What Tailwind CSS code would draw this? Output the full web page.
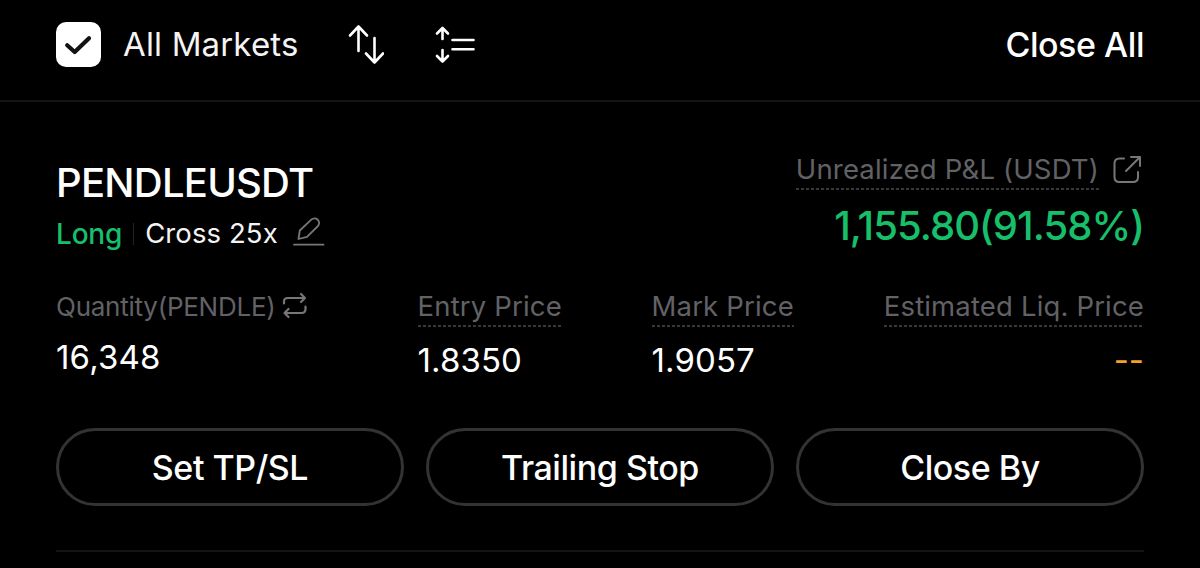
<!DOCTYPE html>
<html lang="en">

<head>
    <meta charset="UTF-8" />
    <meta name="viewport" content="width=device-width, initial-scale=1.0" />
    <title>Positions</title>
    <script src="https://cdn.jsdelivr.net/npm/@tailwindcss/browser@4"></script>
</head>

<body class="h-[568px] overflow-hidden bg-black font-['Inter',sans-serif] text-white">
    <header class="flex h-[102px] items-start justify-between border-b-2 border-[#141417] px-14 pt-[22px]">
        <div class="flex h-[45px] items-center">
            <svg class="size-[45px]" viewBox="0 0 45 45" fill="none">
                <rect width="45" height="45" rx="10" fill="#fff" />
                <path d="M11.2 23.2 18.7 30 33 16.2" stroke="#121214" stroke-width="4.2" stroke-linecap="round" stroke-linejoin="round" />
            </svg>
            <span class="ml-[22px] w-[175px] text-[33px] leading-[45px] tracking-[0.15px] whitespace-nowrap text-[#f4f4f4]">All Markets</span>
            <svg class="ml-[50px] h-[45px] w-[36px]" viewBox="348 22 36 45" fill="none" stroke="#fff" stroke-width="2.6" stroke-linecap="round" stroke-linejoin="round">
                <path d="M358.5 51V26.5M350 35.5 358.5 26.5 367 35.5" />
                <path d="M374.5 38V62.5M366 53.5 374.5 62.5 383 53.5" />
            </svg>
            <svg class="ml-[50px] h-[45px] w-[42px]" viewBox="434 22 42 45" fill="none" stroke="#fff" stroke-width="2.6" stroke-linecap="round" stroke-linejoin="round">
                <path d="M442.5 39V28M437 33.5 442.5 28 448 33.5" />
                <path d="M442.5 50V61.5M437 56 442.5 61.5 448 56" />
                <path d="M452.5 40H473.5M452.5 49.3H473.5" />
            </svg>
        </div>
        <button class="text-[34px] leading-[46px] font-medium tracking-[-0.45px]">Close All</button>
    </header>

    <main class="px-14">
        <section class="h-[450px] border-b-2 border-[#141417] pt-[50px]">
            <div class="flex h-[109px] justify-between">
                <div>
                    <h1 class="mt-[6px] text-[40px] leading-[50px] font-medium tracking-[-0.75px]">PENDLEUSDT</h1>
                    <div class="mt-[8px] flex h-[36px] items-center text-[28px]">
                        <span class="font-medium tracking-[-0.2px] text-[#17bf6b]">Long</span>
                        <span class="mx-[11px] h-[22px] w-px bg-[#222224]"></span>
                        <span class="w-[132px] text-[27.5px] tracking-[0.1px] whitespace-nowrap text-[#f4f4f4]">Cross 25x</span>
                        <svg class="ml-[16px] h-[36px] w-[32px]" viewBox="294 216 32 36" fill="none" stroke="#77777b" stroke-width="1.8" stroke-linecap="round" stroke-linejoin="round">
                            <path d="M299.5 239 300.8 230.5 312 219.8Q315.5 217 318.5 219.5 321.5 222.5 319 226L308 236.8Z" />
                            <path d="M295 244.7H324.5" />
                        </svg>
                    </div>
                </div>
                <div class="flex flex-col items-end">
                    <div class="flex items-start">
                        <div>
                            <div class="text-[27.5px] leading-[34px] tracking-[0.17px] text-[#626266]">Unrealized P&amp;L (USDT)</div>
                            <div class="mt-[2px] h-[2px] bg-[repeating-linear-gradient(90deg,#38383b_0_3px,transparent_3px_5px)]"></div>
                        </div>
                        <svg class="ml-[14px] h-[34px] w-[31px]" viewBox="1113 152.5 31 34" fill="none" stroke="#77777b" stroke-width="2" stroke-linecap="round" stroke-linejoin="round">
                            <path d="M1124 159H1119.5Q1114.5 159 1114.5 164V177.5Q1114.5 182.5 1119.5 182.5H1133Q1138 182.5 1138 177.5V172.5" />
                            <path d="M1126 171.5 1140 157.5M1131 157.5H1140V166.5" />
                        </svg>
                    </div>
                    <div class="mt-[11px] text-[40px] leading-[50px] font-medium tracking-[-0.95px] text-[#17bf6b]">1,155.80(91.58%)</div>
                </div>
            </div>

            <div class="mt-[26px] flex h-[100px]">
                <div class="w-[361.5px]">
                    <div class="flex h-[38px] items-center text-[26px] text-[#626266]">
                        <span class="w-[219px] tracking-[-0.25px]">Quantity(PENDLE)</span>
                        <svg class="ml-[7px] h-[30px] w-[26px]" viewBox="282 291 26 30" fill="none" stroke="#77777b" stroke-width="2.2" stroke-linecap="round" stroke-linejoin="round">
                            <path d="M284 303.5V301.5Q284 298 288 298H305M301 294 305 298 301 302" />
                            <path d="M305.5 306.5V309Q305.5 313 301.5 313H284.5M288.5 309 284.5 313 288.5 317" />
                        </svg>
                    </div>
                    <div class="mt-[10px] text-[33px] leading-[44px] tracking-[0.2px]">16,348</div>
                </div>
                <div class="w-[234px]">
                    <div class="inline-block">
                        <div class="text-[27.5px] leading-[38px] tracking-[0.18px] text-[#626266]">Entry Price</div>
                        <div class="h-[2px] bg-[repeating-linear-gradient(90deg,#38383b_0_3px,transparent_3px_5px)]"></div>
                    </div>
                    <div class="mt-[11px] text-[33px] leading-[44px] tracking-[0.1px]">1.8350</div>
                </div>
                <div>
                    <div class="inline-block">
                        <div class="text-[27.5px] leading-[38px] tracking-[0.18px] text-[#626266]">Mark Price</div>
                        <div class="h-[2px] bg-[repeating-linear-gradient(90deg,#38383b_0_3px,transparent_3px_5px)]"></div>
                    </div>
                    <div class="mt-[11px] text-[33px] leading-[44px] tracking-[0.1px]">1.9057</div>
                </div>
                <div class="ml-auto text-right">
                    <div class="inline-block">
                        <div class="text-[27.5px] leading-[38px] tracking-[0.16px] text-[#626266]">Estimated Liq. Price</div>
                        <div class="h-[2px] bg-[repeating-linear-gradient(90deg,#38383b_0_3px,transparent_3px_5px)]"></div>
                    </div>
                    <div class="mt-[11px] text-[33px] leading-[44px] text-[#f7a12b]">--</div>
                </div>
            </div>

            <div class="mt-[41px] grid grid-cols-3 gap-[22px]">
                <button class="h-[78px] rounded-full border-3 border-[#333336] text-[34px] font-medium tracking-[-0.45px]">Set TP/SL</button>
                <button class="h-[78px] rounded-full border-3 border-[#333336] text-[34px] font-medium tracking-[-0.45px]">Trailing Stop</button>
                <button class="h-[78px] rounded-full border-3 border-[#333336] text-[34px] font-medium tracking-[-0.45px]">Close By</button>
            </div>
        </section>
    </main>
</body>

</html>
